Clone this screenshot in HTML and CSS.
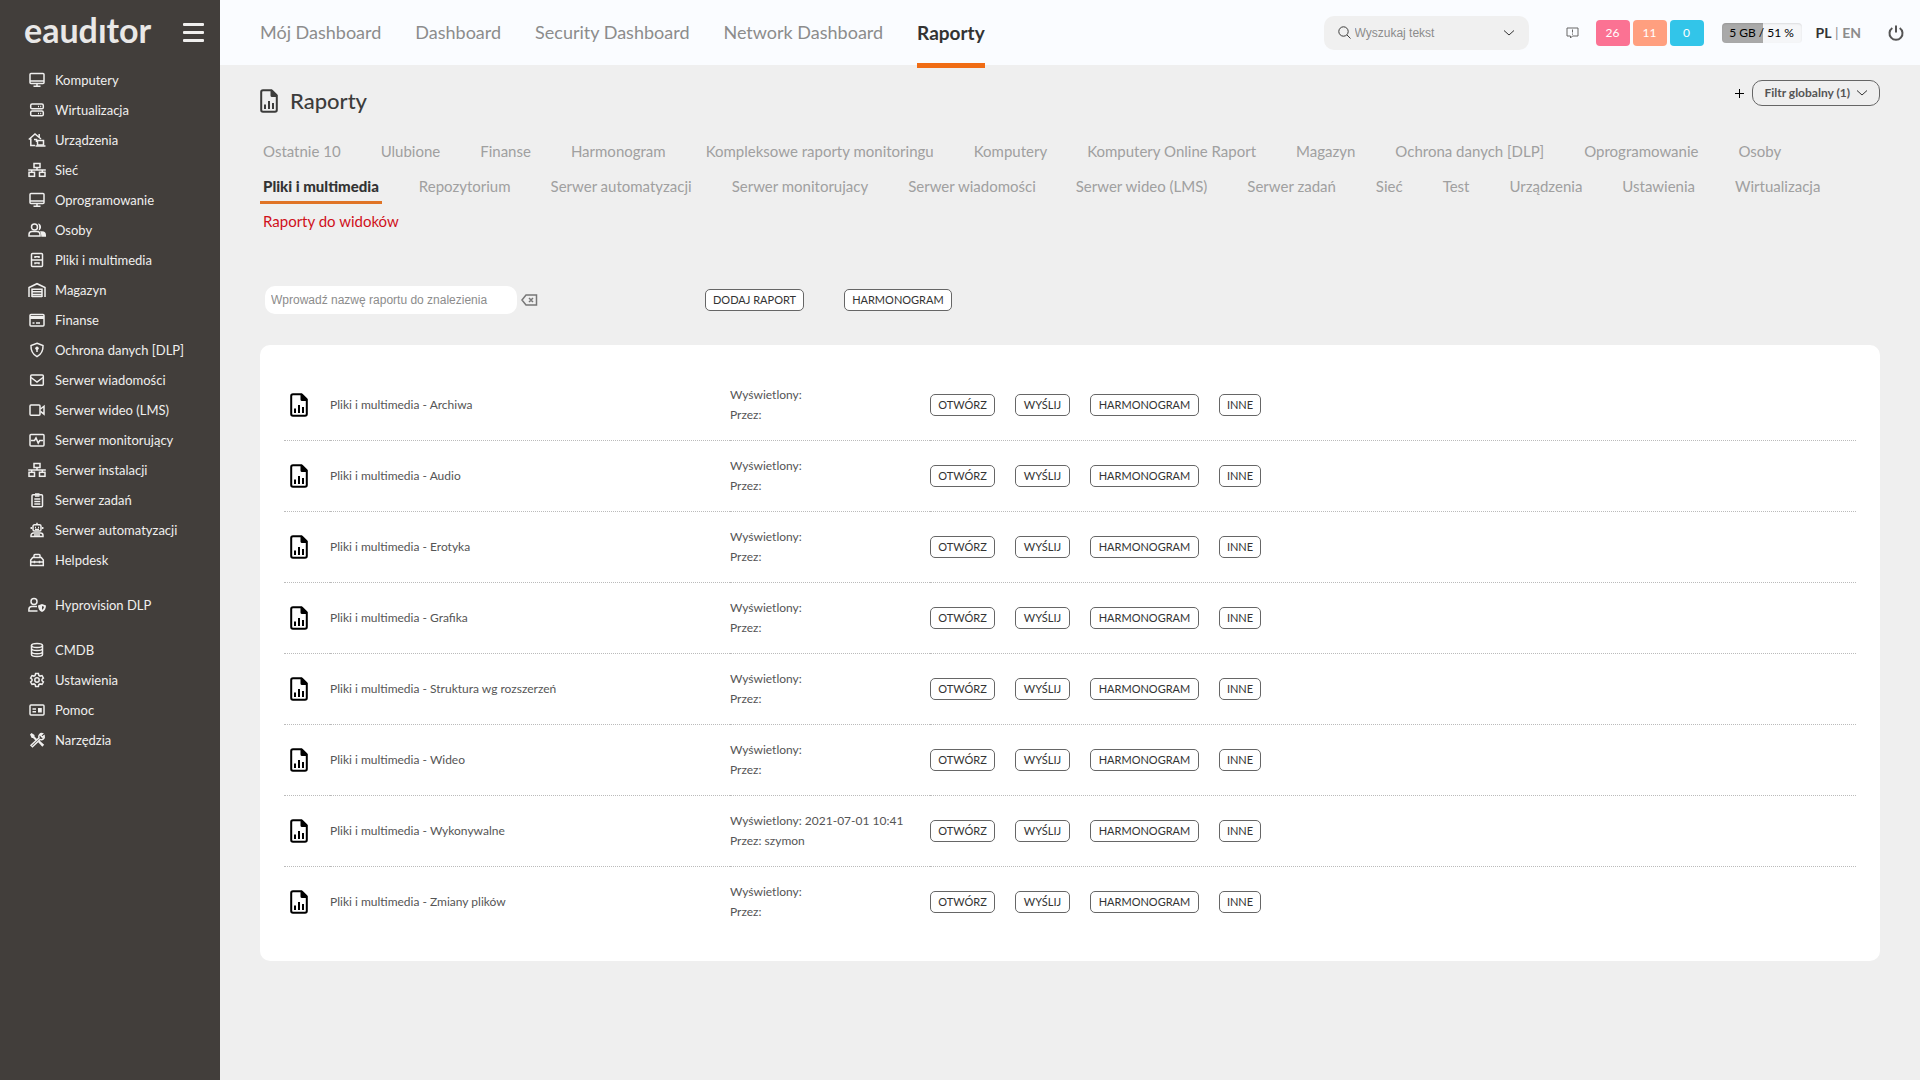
FILE: index.html
```html
<!DOCTYPE html>
<html lang="pl">
<head>
<meta charset="utf-8">
<title>Raporty</title>
<meta name="viewport" content="width=device-width, initial-scale=1">
<link rel="stylesheet" href="styles.css">
</head>
<body>
<svg class="sprite" aria-hidden="true">
  <symbol id="i-monitor" viewBox="0 0 18 16"><rect x="2" y="1.6" width="14" height="10" rx="1"/><path d="M2 9h14M9 12v2M5.500 14.200h7"/></symbol>
  <symbol id="i-server" viewBox="0 0 18 16"><rect x="2.700" y="2" width="12.600" height="4.800" rx="1.400"/><rect x="2.700" y="9" width="12.600" height="4.800" rx="1.400"/><path d="M10 4.400h1M12.200 4.400h1M10 11.400h1M12.200 11.400h1"/></symbol>
  <symbol id="i-house" viewBox="0 0 18 16"><path d="M.8 7.500L7 2l6 5M2.800 6.500v7H7M11.200 2v3M6 7.500h2.500V10"/><rect x="9.500" y="8.500" width="6" height="4.500"/><path d="M7.500 14h10"/></symbol>
  <symbol id="i-net" viewBox="0 0 18 16"><rect x="6" y="1.500" width="6" height="4"/><rect x="1" y="10.300" width="5.500" height="4"/><rect x="11.500" y="10.300" width="5.500" height="4"/><path d="M9 5.500V8M.2 8h17.600M3.700 8v2M14.300 8v2"/></symbol>
  <symbol id="i-users" viewBox="0 0 18 16"><circle cx="6.500" cy="5" r="3"/><path d="M1 14v-1.500a3 3 0 0 1 3-3h5a3 3 0 0 1 3 3V14z"/><path class="solid" d="M10 1.500a3.600 3.600 0 0 1 .5 7c1-2 1-5-.5-7zM12.500 9.200h1.500a4 4 0 0 1 4 4V14.700h-4.700c0-2-.3-4-1.300-5.500z"/></symbol>
  <symbol id="i-cabinet" viewBox="0 0 18 16"><rect x="3.500" y="1.500" width="11" height="13" rx="1"/><path d="M3.500 8h11M7 6V4.800h4V6M7 12.300v-1.200h4v1.200"/></symbol>
  <symbol id="i-store" viewBox="0 0 18 16"><path d="M1 15V5.500L9 1.700l8 3.800V15M4 15V7.200h10V15M4 9.800h10M4 12.400h10M4 14.600h10"/></symbol>
  <symbol id="i-card" viewBox="0 0 18 16"><rect x="2" y="2.500" width="14" height="11.500" rx="1"/><path class="solid" d="M2 4h14v3H2z"/><path d="M4.500 11h2M8 11h4"/></symbol>
  <symbol id="i-shield" viewBox="0 0 18 16"><path d="M9 1.300l6 2.300c.3 5-1.800 8.700-6 11.100C4.800 12.300 2.700 8.600 3 3.600z"/><circle class="solid" cx="9" cy="6.200" r="1.700"/><path d="M9 6v4"/></symbol>
  <symbol id="i-mail" viewBox="0 0 18 16"><rect x="2.700" y="3" width="12.600" height="10.300" rx="1"/><path d="M3 5.500l6 4.500 6-4.500"/></symbol>
  <symbol id="i-video" viewBox="0 0 18 16"><rect x="2" y="3" width="10" height="10.300" rx="1"/><path d="M12.500 7L16 4.200v8L12.500 9.300"/></symbol>
  <symbol id="i-pulse" viewBox="0 0 18 16"><rect x="2" y="2.500" width="14" height="11.500" rx="1"/><path d="M3 8.500h3.500L8 6l2.200 5 1.500-2.500H15"/></symbol>
  <symbol id="i-clip" viewBox="0 0 18 16"><rect x="4" y="2.700" width="10.500" height="12" rx="1"/><path d="M7 2h4.500M7 4h4.500M6.300 7h6M6.300 9.500h6M6.300 12h6"/></symbol>
  <symbol id="i-robot" viewBox="0 0 18 16"><rect x="5" y="2.800" width="8" height="6.200" rx="1.500"/><path d="M9 .8v2M3.300 5v2M14.700 5v2M7 5.500h1M10 5.500h1M7 7.500h4"/><path d="M3 14.500v-1a2.500 2.500 0 0 1 2.500-2.500h7a2.500 2.500 0 0 1 2.500 2.500v1z"/><path d="M6 13h6"/></symbol>
  <symbol id="i-box" viewBox="0 0 18 16"><path d="M2.700 13.500V8l2-2.500h8.600l2 2.500v5.500zM6 5.500V3.500c0-.6.4-1 1-1h4c.6 0 1 .4 1 1v2M2.700 10h12.600M6.500 8.800v2.400M11.500 8.800v2.400"/></symbol>
  <symbol id="i-usershield" viewBox="0 0 18 16"><circle cx="6" cy="4.500" r="3"/><path d="M9.500 14H.9v-1.500a3 3 0 0 1 3-3H9"/><path class="solid" d="M14 7l4 1.500c0 3-1.300 5.300-4 6.500-2.700-1.200-4-3.500-4-6.500z"/><path class="cut" d="M14 9v3.800c1.200-.8 1.800-1.700 2-3z"/></symbol>
  <symbol id="i-db" viewBox="0 0 18 16"><ellipse cx="9" cy="3.500" rx="5.500" ry="2"/><path d="M3.500 3.500v9c0 1.100 2.500 2 5.500 2s5.500-.9 5.500-2v-9M3.500 6.500c0 1.100 2.500 2 5.500 2s5.500-.9 5.500-2M3.500 9.700c0 1.100 2.500 2 5.500 2s5.500-.9 5.500-2"/></symbol>
  <symbol id="i-gear" viewBox="0 0 18 16"><path d="M7.600 1.500h2.800l.5 1.900 1.200.7 1.900-.5 1.400 2.400-1.400 1.300v1.400l1.400 1.300-1.400 2.400-1.900-.5-1.200.7-.5 1.900H7.600l-.5-1.900-1.200-.7-1.900.5L2.600 10 4 8.700V7.300L2.600 6 4 3.600l1.900.5 1.200-.7z"/><circle cx="9" cy="8" r="2.200"/></symbol>
  <symbol id="i-id" viewBox="0 0 18 16"><rect x="2" y="3" width="14" height="10" rx="1"/><path d="M4.500 7h3.500M4.500 9.800h3.500"/><rect class="solid" x="10" y="6" width="3.800" height="4.500"/></symbol>
  <symbol id="i-tools" viewBox="0 0 18 16"><path d="M3 13.300l8-7.600a3 3 0 0 1 3.500-4L12.800 3.500l1.500 1.700 1.800-1.500a3 3 0 0 1-4 3.700L4.500 14.700z"/><path class="solid" d="M2 2.500L3.500 1l3 2v1.500l3 3L8 9 5 6H3.700zM10 10l1.500-1.500 4.700 4.200-1.900 2z"/></symbol>
  <symbol id="i-report" viewBox="0 0 18 24"><path class="line" d="M3 1.200h8.500L16.800 6.500V21a1.800 1.800 0 0 1-1.800 1.800H3A1.800 1.800 0 0 1 1.200 21V3A1.800 1.800 0 0 1 3 1.200z"/><path class="solid" d="M10.500 1h2L17 5.500V8h-5a1.500 1.500 0 0 1-1.500-1.500zM4 15.500h2v4.500H4zM8 12h2v8H8zM12 14h2v6h-2z"/></symbol>
  <symbol id="i-chevron" viewBox="0 0 12 8"><path d="M1 1.500l5 4.500 5-4.500"/></symbol>
</svg>

<div class="app">
  <aside class="sidebar">
    <div class="brand">
      <a class="logo" href="#" aria-label="eauditor">eaudıtor</a>
      <button class="burger" type="button" aria-label="Menu"><span></span><span></span><span></span></button>
    </div>
    <nav aria-label="Menu główne">
      <ul class="menu">
        <li><a href="#"><svg><use href="#i-monitor"/></svg>Komputery</a></li>
        <li><a href="#"><svg><use href="#i-server"/></svg>Wirtualizacja</a></li>
        <li><a href="#"><svg><use href="#i-house"/></svg>Urządzenia</a></li>
        <li><a href="#"><svg><use href="#i-net"/></svg>Sieć</a></li>
        <li><a href="#"><svg><use href="#i-monitor"/></svg>Oprogramowanie</a></li>
        <li><a href="#"><svg><use href="#i-users"/></svg>Osoby</a></li>
        <li><a href="#"><svg><use href="#i-cabinet"/></svg>Pliki i multimedia</a></li>
        <li><a href="#"><svg><use href="#i-store"/></svg>Magazyn</a></li>
        <li><a href="#"><svg><use href="#i-card"/></svg>Finanse</a></li>
        <li><a href="#"><svg><use href="#i-shield"/></svg>Ochrona danych [DLP]</a></li>
        <li><a href="#"><svg><use href="#i-mail"/></svg>Serwer wiadomości</a></li>
        <li><a href="#"><svg><use href="#i-video"/></svg>Serwer wideo (LMS)</a></li>
        <li><a href="#"><svg><use href="#i-pulse"/></svg>Serwer monitorujący</a></li>
        <li><a href="#"><svg><use href="#i-net"/></svg>Serwer instalacji</a></li>
        <li><a href="#"><svg><use href="#i-clip"/></svg>Serwer zadań</a></li>
        <li><a href="#"><svg><use href="#i-robot"/></svg>Serwer automatyzacji</a></li>
        <li><a href="#"><svg><use href="#i-box"/></svg>Helpdesk</a></li>
      </ul>
      <ul class="menu">
        <li><a href="#"><svg><use href="#i-usershield"/></svg>Hyprovision DLP</a></li>
      </ul>
      <ul class="menu">
        <li><a href="#"><svg><use href="#i-db"/></svg>CMDB</a></li>
        <li><a href="#"><svg><use href="#i-gear"/></svg>Ustawienia</a></li>
        <li><a href="#"><svg><use href="#i-id"/></svg>Pomoc</a></li>
        <li><a href="#"><svg><use href="#i-tools"/></svg>Narzędzia</a></li>
      </ul>
    </nav>
  </aside>

  <div class="page">
    <header class="topbar">
      <nav class="topnav" aria-label="Dashboardy">
        <a href="#">Mój Dashboard</a>
        <a href="#">Dashboard</a>
        <a href="#">Security Dashboard</a>
        <a href="#">Network Dashboard</a>
        <a href="#" class="active" aria-current="page">Raporty</a>
      </nav>
      <div class="search">
        <svg class="ico-search" viewBox="0 0 13 13"><circle cx="5.500" cy="5.500" r="4.700"/><path d="M9 9l3.500 3.500"/></svg>
        <input type="text" placeholder="Wyszukaj tekst" aria-label="Wyszukaj tekst">
        <button type="button" aria-label="Rozwiń"><svg class="ico-chevron"><use href="#i-chevron"/></svg></button>
      </div>
      <a class="notice" href="#" aria-label="Powiadomienia"><svg viewBox="0 0 13 12"><path d="M1 1h11v8H6.500l-2 2V9H1zM6.500 2.500v3M6.500 6.500v1.200"/></svg></a>
      <div class="badges">
        <a href="#" class="badge pink">26</a>
        <a href="#" class="badge orange">11</a>
        <a href="#" class="badge blue">0</a>
      </div>
      <div class="storage"><span>5 GB / 51 %</span></div>
      <div class="lang"><a href="#" class="on">PL</a><span> | </span><a href="#">EN</a></div>
      <button class="power" type="button" aria-label="Wyloguj"><svg viewBox="0 0 16 16"><path d="M4.300 3a6.500 6.500 0 1 0 7.400 0M8 .5v7"/></svg></button>
    </header>

    <main>
      <div class="heading">
        <svg class="ico-report"><use href="#i-report"/></svg>
        <h1>Raporty</h1>
        <div class="filter">
          <button class="plus" type="button" aria-label="Dodaj filtr"><svg viewBox="0 0 9 9"><path d="M4.500 0v9M0 4.500h9"/></svg></button>
          <button class="global" type="button">Filtr globalny (1)<svg class="ico-chevron"><use href="#i-chevron"/></svg></button>
        </div>
      </div>

      <nav class="tabs" aria-label="Kategorie raportów">
        <a href="#">Ostatnie 10</a>
        <a href="#">Ulubione</a>
        <a href="#">Finanse</a>
        <a href="#">Harmonogram</a>
        <a href="#">Kompleksowe raporty monitoringu</a>
        <a href="#">Komputery</a>
        <a href="#">Komputery Online Raport</a>
        <a href="#">Magazyn</a>
        <a href="#">Ochrona danych [DLP]</a>
        <a href="#">Oprogramowanie</a>
        <a href="#">Osoby</a>
        <a href="#" class="active" aria-current="page">Pliki i multimedia</a>
        <a href="#">Repozytorium</a>
        <a href="#">Serwer automatyzacji</a>
        <a href="#">Serwer monitorujacy</a>
        <a href="#">Serwer wiadomości</a>
        <a href="#">Serwer wideo (LMS)</a>
        <a href="#">Serwer zadań</a>
        <a href="#">Sieć</a>
        <a href="#">Test</a>
        <a href="#">Urządzenia</a>
        <a href="#">Ustawienia</a>
        <a href="#">Wirtualizacja</a>
        <a href="#" class="red">Raporty do widoków</a>
      </nav>

      <div class="tools">
        <div class="find">
          <input type="text" placeholder="Wprowadź nazwę raportu do znalezienia" aria-label="Nazwa raportu">
          <button type="button" aria-label="Wyczyść"><svg viewBox="0 0 17 12"><path d="M5 1h10.500v10H5L1 6zM8 4l4 4M12 4L8 8"/></svg></button>
        </div>
        <button class="btn" type="button">DODAJ RAPORT</button>
        <button class="btn" type="button">HARMONOGRAM</button>
      </div>

      <section class="card">
        <table>
          <colgroup><col class="c-icon"><col class="c-name"><col class="c-seen"><col></colgroup>
          <tbody>
            <tr><td><svg class="ico-report"><use href="#i-report"/></svg></td><td>Pliki i multimedia - Archiwa</td><td>Wyświetlony:<br>Przez:</td><td><div class="actions"><button class="btn" type="button">OTWÓRZ</button><button class="btn" type="button">WYŚLIJ</button><button class="btn" type="button">HARMONOGRAM</button><button class="btn" type="button">INNE</button></div></td></tr>
            <tr><td><svg class="ico-report"><use href="#i-report"/></svg></td><td>Pliki i multimedia - Audio</td><td>Wyświetlony:<br>Przez:</td><td><div class="actions"><button class="btn" type="button">OTWÓRZ</button><button class="btn" type="button">WYŚLIJ</button><button class="btn" type="button">HARMONOGRAM</button><button class="btn" type="button">INNE</button></div></td></tr>
            <tr><td><svg class="ico-report"><use href="#i-report"/></svg></td><td>Pliki i multimedia - Erotyka</td><td>Wyświetlony:<br>Przez:</td><td><div class="actions"><button class="btn" type="button">OTWÓRZ</button><button class="btn" type="button">WYŚLIJ</button><button class="btn" type="button">HARMONOGRAM</button><button class="btn" type="button">INNE</button></div></td></tr>
            <tr><td><svg class="ico-report"><use href="#i-report"/></svg></td><td>Pliki i multimedia - Grafika</td><td>Wyświetlony:<br>Przez:</td><td><div class="actions"><button class="btn" type="button">OTWÓRZ</button><button class="btn" type="button">WYŚLIJ</button><button class="btn" type="button">HARMONOGRAM</button><button class="btn" type="button">INNE</button></div></td></tr>
            <tr><td><svg class="ico-report"><use href="#i-report"/></svg></td><td>Pliki i multimedia - Struktura wg rozszerzeń</td><td>Wyświetlony:<br>Przez:</td><td><div class="actions"><button class="btn" type="button">OTWÓRZ</button><button class="btn" type="button">WYŚLIJ</button><button class="btn" type="button">HARMONOGRAM</button><button class="btn" type="button">INNE</button></div></td></tr>
            <tr><td><svg class="ico-report"><use href="#i-report"/></svg></td><td>Pliki i multimedia - Wideo</td><td>Wyświetlony:<br>Przez:</td><td><div class="actions"><button class="btn" type="button">OTWÓRZ</button><button class="btn" type="button">WYŚLIJ</button><button class="btn" type="button">HARMONOGRAM</button><button class="btn" type="button">INNE</button></div></td></tr>
            <tr><td><svg class="ico-report"><use href="#i-report"/></svg></td><td>Pliki i multimedia - Wykonywalne</td><td>Wyświetlony: 2021-07-01 10:41<br>Przez: szymon</td><td><div class="actions"><button class="btn" type="button">OTWÓRZ</button><button class="btn" type="button">WYŚLIJ</button><button class="btn" type="button">HARMONOGRAM</button><button class="btn" type="button">INNE</button></div></td></tr>
            <tr><td><svg class="ico-report"><use href="#i-report"/></svg></td><td>Pliki i multimedia - Zmiany plików</td><td>Wyświetlony:<br>Przez:</td><td><div class="actions"><button class="btn" type="button">OTWÓRZ</button><button class="btn" type="button">WYŚLIJ</button><button class="btn" type="button">HARMONOGRAM</button><button class="btn" type="button">INNE</button></div></td></tr>
          </tbody>
        </table>
      </section>
    </main>
  </div>
</div>
</body>
</html>
```

FILE: styles.css
```css
* { box-sizing: border-box; }
body { margin: 0; background: #efefef; color: #3c3c3b; font: 14px/20px Lato, sans-serif; }
a { color: inherit; text-decoration: none; }
button { margin: 0; padding: 0; border: 0; background: none; color: inherit; font: inherit; cursor: pointer; }
svg { display: block; flex: none; fill: none; stroke: currentColor; }
.sprite { position: absolute; width: 0; height: 0; }
.solid { fill: currentColor; stroke: none; }
.cut { fill: #423e3b; stroke: none; }

.app { display: flex; min-height: 100vh; }

/* Sidebar */
.sidebar { flex: none; width: 220px; background: #423e3b; color: #f0efee; }
.brand { display: flex; align-items: center; justify-content: space-between; height: 65px; padding: 0 16px 0 24px; }
.logo { padding-bottom: 6px; color: #e9e8e7; font-size: 34px; line-height: 48px; font-weight: 700; }
.burger { display: grid; gap: 5px; width: 21px; }
.burger span { height: 3px; border-radius: 1px; background: #f0efee; }
.menu { margin: 0 0 15px; padding: 0; list-style: none; font-size: 13px; }
.menu a { display: flex; align-items: center; gap: 9px; height: 30px; padding-left: 28px; }
.menu svg { width: 18px; height: 16px; stroke-width: 1.5; }

/* Top bar */
.page { flex: 1; min-width: 0; }
.topbar { display: flex; align-items: center; height: 65px; padding: 0 16px 0 40px; background: #fafcff; }
.topnav { display: flex; gap: 34px; margin-right: auto; color: #8c8c8c; font-size: 18px; }
.topnav a { position: relative; line-height: 65px; }
.topnav .active { color: #333; font-size: 19px; font-weight: 700; }
.topnav .active::after { content: ""; position: absolute; left: 0; right: 0; bottom: -3px; height: 5px; background: #f06c14; }
.search { display: flex; align-items: center; width: 205px; height: 34px; padding: 0 14px; border-radius: 10px; background: #f0f0f0; }
.search input { flex: 1; min-width: 0; margin: 0; padding: 0 4px; border: 0; background: none; font: 12px/20px "Liberation Sans", sans-serif; }
input::placeholder { color: #8c8c8c; opacity: 1; }
.ico-search { width: 13px; height: 13px; }
.ico-chevron { width: 12px; height: 8px; color: #333; }
.notice { margin: 0 17px 0 37px; color: #666; }
.notice svg { width: 13px; height: 12px; }
.badges { display: flex; gap: 3px; }
.badge { width: 34px; height: 26px; border-radius: 4px; color: #fff; font-size: 12px; line-height: 26px; text-align: center; }
.pink { background: #fb7293; }
.orange { background: #ff9f7f; }
.blue { background: #32c5e9; }
.storage { width: 80px; height: 20px; margin: 0 14px 0 18px; border-radius: 4px; background: linear-gradient(90deg, #a9a9a9 51%, #f5f6f8 51%); box-shadow: inset 0 1px 2px #0000001a; color: #000; font-size: 12px; text-align: center; }
.lang { color: #8c8c8c; font-weight: 700; }
.lang .on { color: #333; }
.lang span { font-weight: 400; }
.power { margin-left: 27px; color: #555; }
.power svg { width: 16px; height: 16px; stroke-width: 2; }

/* Page heading */
main { padding: 15px 40px 40px; }
.heading { display: flex; align-items: center; height: 42px; }
.heading h1 { margin: 0 auto 0 12px; font-size: 22px; line-height: 28px; font-weight: 500; }
.ico-report { width: 18px; height: 24px; stroke-width: 2; }
.filter { display: flex; align-items: center; align-self: flex-start; gap: 8px; }
.plus { color: #000; }
.plus svg { width: 9px; height: 9px; }
.global { display: flex; align-items: center; gap: 6px; height: 26px; padding: 0 11px; border: 1px solid #666; border-radius: 10px; color: #555; font-size: 12px; font-weight: 700; }

/* Category tabs */
.tabs { display: flex; flex-wrap: wrap; column-gap: 34px; margin-top: 12px; color: #a0a0a0; font-size: 15px; }
.tabs a { height: 35px; padding: 0 3px; line-height: 35px; }
.tabs .active { box-shadow: inset 0 -3px #e07426; color: #333; font-weight: 900; }
.tabs .red { color: #d0111b; }

/* Report search and list */
.tools { display: flex; align-items: center; gap: 40px; margin: 47px 0 31px 5px; }
.find { display: flex; align-items: center; gap: 4px; width: 400px; }
.find input { width: 252px; height: 28px; margin: 0; padding: 0 6px; border: 0; border-radius: 10px; background: #fff; font: 12px/20px "Liberation Sans", sans-serif; }
.find button { color: #777; }
.find svg { width: 17px; height: 12px; stroke-width: 1.5; }
.btn { height: 22px; padding: 0 7px; border: 1px solid #666; border-radius: 5px; background: #fff; color: #333; font-size: 11px; line-height: 20px; white-space: nowrap; }
.card { padding: 24px; border-radius: 10px; background: #fff; }
table { width: 100%; border-spacing: 0; table-layout: fixed; color: #555; font-size: 12px; }
.c-icon { width: 46px; }
.c-name { width: 400px; }
.c-seen { width: 200px; }
td { height: 71px; padding: 0; }
td .ico-report { margin-left: 6px; color: #000; }
tr + tr td { border-top: 1px dotted #bbb; }
.actions { display: grid; grid-template-columns: 65px 55px 109px 42px; gap: 20px; }
.actions .btn { padding: 0; }
```
